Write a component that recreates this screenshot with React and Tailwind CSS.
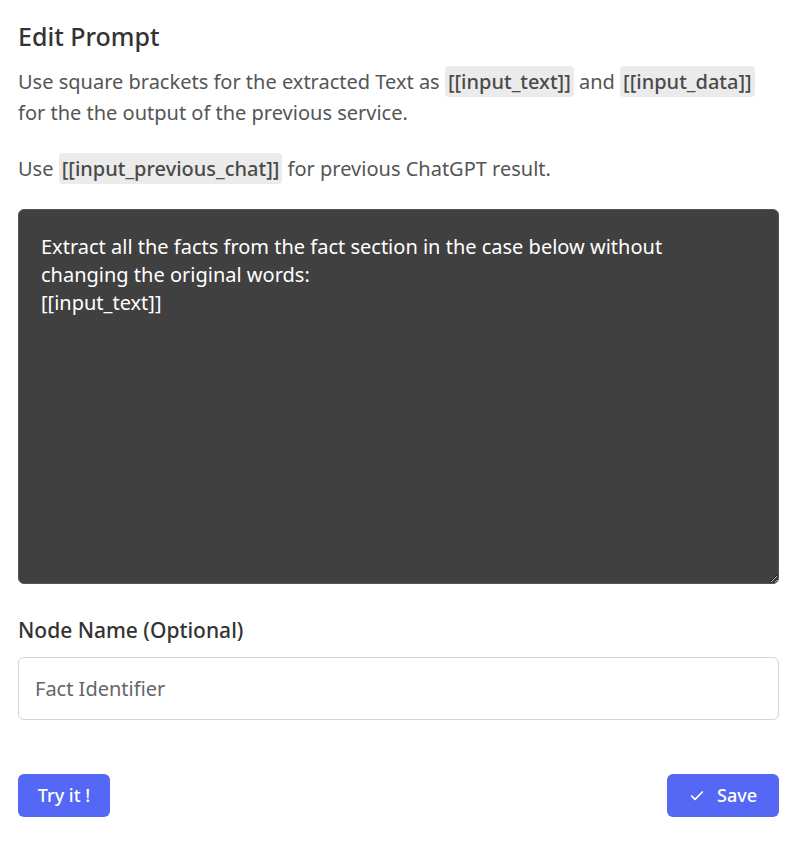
import { Check } from 'lucide-react';

function Tag({ children }) {
  return (
    <span className="rounded-[4px] bg-[#ebebeb] px-[3px] py-[2px] font-medium text-[#4a4a4a]">{children}</span>
  );
}

export default function App() {
  return (
    <div className="min-h-[859px] bg-white pl-[18px] pr-[27px] pt-[20px] font-['Noto_Sans',sans-serif] text-[#555]">
      {/* Header */}
      <h2 className="text-[25px] font-medium leading-[32px] text-[#333]">Edit Prompt</h2>
      <p className="mt-[14px] text-[20px] leading-[31px]">
        Use square brackets for the extracted Text as <Tag>[[input_text]]</Tag> and <Tag>[[input_data]]</Tag>{' '}
        for the the output of the previous service.
      </p>
      <p className="mt-[25px] text-[20px] leading-[31px]">
        Use <Tag>[[input_previous_chat]]</Tag> for previous ChatGPT result.
      </p>

      {/* Prompt body */}
      <textarea
        className="mt-[25px] block h-[375px] w-full resize-y rounded-[6px] border border-[#555] bg-[#404040] pb-[23px] pl-[22px] pr-[44px] pt-[23px] text-[20px] leading-[28px] text-white outline-none"
        defaultValue={'Extract all the facts from the fact section in the case below without changing the original words:\n[[input_text]]'}
      />

      <label className="mt-[32px] block text-[21px] font-medium leading-[28px] text-[#333]">Node Name (Optional)</label>
      <input
        className="mt-[13px] block h-[63px] w-full rounded-[6px] border border-[#d4d4d4] px-[16px] text-[20px] text-[#555] outline-none placeholder:text-[#666]"
        placeholder="Fact Identifier"
      />

      {/* Actions */}
      <div className="mt-[54px] flex items-center justify-between">
        <button className="h-[43px] w-[92px] rounded-[6px] bg-[#5468f5] text-[18px] font-medium text-white">Try it !</button>
        <button className="flex h-[43px] w-[112px] items-center justify-center gap-[12px] rounded-[6px] bg-[#5468f5] text-[18px] font-medium text-white">
          <Check size={16} strokeWidth={2.5} />
          Save
        </button>
      </div>
    </div>
  );
}
